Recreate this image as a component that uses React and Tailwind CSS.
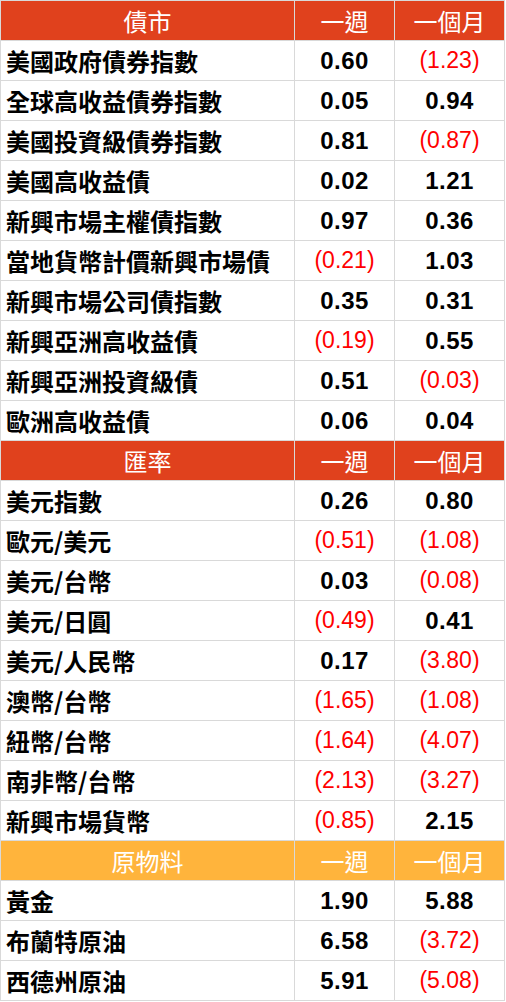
const sections = [
  {
    title: '債市',
    head: 'bg-[#e0411d]',
    rows: [
      ['美國政府債券指數', '0.60', '(1.23)'],
      ['全球高收益債券指數', '0.05', '0.94'],
      ['美國投資級債券指數', '0.81', '(0.87)'],
      ['美國高收益債', '0.02', '1.21'],
      ['新興市場主權債指數', '0.97', '0.36'],
      ['當地貨幣計價新興市場債', '(0.21)', '1.03'],
      ['新興市場公司債指數', '0.35', '0.31'],
      ['新興亞洲高收益債', '(0.19)', '0.55'],
      ['新興亞洲投資級債', '0.51', '(0.03)'],
      ['歐洲高收益債', '0.06', '0.04'],
    ],
  },
  {
    title: '匯率',
    head: 'bg-[#e0411d]',
    rows: [
      ['美元指數', '0.26', '0.80'],
      ['歐元/美元', '(0.51)', '(1.08)'],
      ['美元/台幣', '0.03', '(0.08)'],
      ['美元/日圓', '(0.49)', '0.41'],
      ['美元/人民幣', '0.17', '(3.80)'],
      ['澳幣/台幣', '(1.65)', '(1.08)'],
      ['紐幣/台幣', '(1.64)', '(4.07)'],
      ['南非幣/台幣', '(2.13)', '(3.27)'],
      ['新興市場貨幣', '(0.85)', '2.15'],
    ],
  },
  {
    title: '原物料',
    head: 'bg-[#ffb43c]',
    rows: [
      ['黃金', '1.90', '5.88'],
      ['布蘭特原油', '6.58', '(3.72)'],
      ['西德州原油', '5.91', '(5.08)'],
    ],
  },
]

const cjk = { fontFamily: '"Noto Sans CJK TC", "Noto Sans", sans-serif' }
const num = { fontFamily: '"Liberation Sans", Arial, sans-serif' }

function Value({ v }) {
  const neg = v.startsWith('(')
  return (
    <span
      style={num}
      className={
        neg
          ? 'text-[23px] leading-none font-normal text-[#ff0000]'
          : 'text-[24px] leading-none font-bold tracking-[0.5px] text-black'
      }
    >
      {v}
    </span>
  )
}

export default function App() {
  return (
    <div className="w-[506px] bg-white">
      <div className="w-[505px] border-l border-t border-[#d9d9d9]">
        {sections.map((s) => (
          <div key={s.title}>
            <div className={`flex h-[40px] border-b border-[#d9d9d9] text-[24px] leading-none text-white ${s.head}`} style={cjk}>
              <div className="flex w-[294px] items-center justify-center border-r border-[#d9d9d9]">{s.title}</div>
              <div className="flex w-[100px] items-center justify-center border-r border-[#d9d9d9]">一週</div>
              <div className="flex w-[110px] items-center justify-center border-r border-[#d9d9d9]">一個月</div>
            </div>
            {s.rows.map(([name, w, m]) => (
              <div key={name} className="flex h-[40px] border-b border-[#d9d9d9]">
                <div
                  className="flex w-[294px] items-center border-r border-[#d9d9d9] pl-[5px] text-[24px] font-bold leading-none text-black"
                  style={cjk}
                >
                  {name}
                </div>
                <div className="flex w-[100px] items-center justify-center border-r border-[#d9d9d9]">
                  <Value v={w} />
                </div>
                <div className="flex w-[110px] items-center justify-center border-r border-[#d9d9d9]">
                  <Value v={m} />
                </div>
              </div>
            ))}
          </div>
        ))}
      </div>
    </div>
  )
}
